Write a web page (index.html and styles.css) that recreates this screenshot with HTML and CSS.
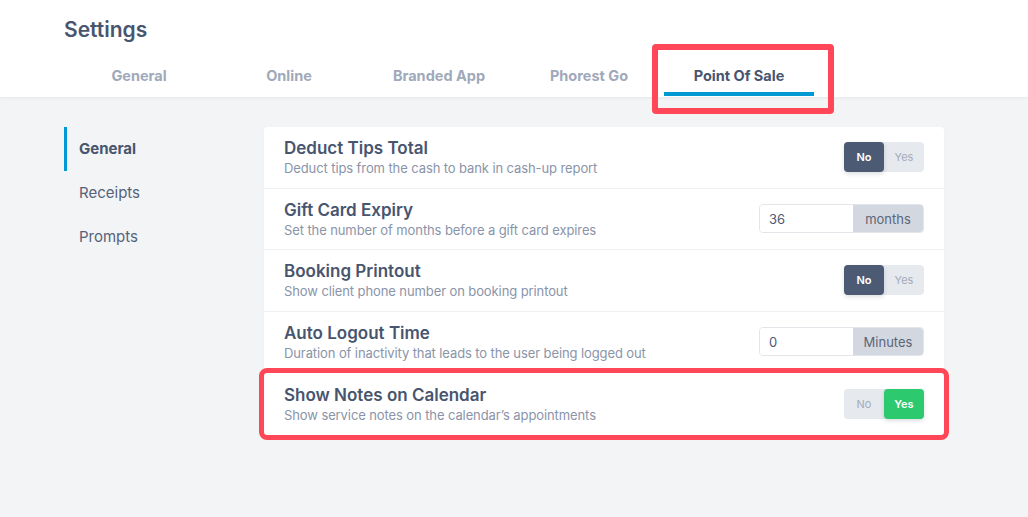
FILE: index.html
```html
<!DOCTYPE html>
<html>
<head>
<meta charset="utf-8">
<link rel="stylesheet" href="styles.css">
</head>
<body>
<header class="header">
  <h1 class="title">Settings</h1>
  <nav class="tabs">
    <div class="tab">General</div>
    <div class="tab">Online</div>
    <div class="tab">Branded App</div>
    <div class="tab">Phorest Go</div>
    <div class="tab tab-active">Point Of Sale<span class="mark mark-tab"></span></div>
  </nav>
</header>
<main class="main">
  <aside class="side">
    <div class="side-item side-active">General</div>
    <div class="side-item">Receipts</div>
    <div class="side-item">Prompts</div>
  </aside>
  <section class="card">
    <div class="row">
      <div class="text">
        <div class="row-title">Deduct Tips Total</div>
        <div class="row-desc">Deduct tips from the cash to bank in cash-up report</div>
      </div>
      <div class="toggle"><span class="opt on-dark">No</span><span class="opt">Yes</span></div>
    </div>
    <div class="row">
      <div class="text">
        <div class="row-title">Gift Card Expiry</div>
        <div class="row-desc">Set the number of months before a gift card expires</div>
      </div>
      <div class="group"><span class="field">36</span><span class="addon">months</span></div>
    </div>
    <div class="row">
      <div class="text">
        <div class="row-title">Booking Printout</div>
        <div class="row-desc">Show client phone number on booking printout</div>
      </div>
      <div class="toggle"><span class="opt on-dark">No</span><span class="opt">Yes</span></div>
    </div>
    <div class="row">
      <div class="text">
        <div class="row-title">Auto Logout Time</div>
        <div class="row-desc">Duration of inactivity that leads to the user being logged out</div>
      </div>
      <div class="group"><span class="field">0</span><span class="addon">Minutes</span></div>
    </div>
    <div class="row row-marked">
      <div class="text">
        <div class="row-title">Show Notes on Calendar</div>
        <div class="row-desc">Show service notes on the calendar’s appointments</div>
      </div>
      <div class="toggle"><span class="opt">No</span><span class="opt on-green">Yes</span></div>
    </div>
  </section>
</main>
</body>
</html>
```
FILE: styles.css
```css
* { box-sizing: border-box; }
html, body { margin: 0; padding: 0; }
body {
  width: 1028px;
  height: 517px;
  overflow: hidden;
  background: #f3f4f6;
  font-family: Inter, "Open Sans", "Liberation Sans", sans-serif;
  color: #4a5670;
}
.header {
  background: #fff;
  height: 97px;
  padding: 16px 0 0 64px;
  box-shadow: 0 1px 3px rgba(30, 40, 60, 0.06);
  position: relative;
  z-index: 1;
}
.title {
  margin: 0;
  font-size: 21px;
  line-height: 28px;
  font-weight: 600;
  color: #48556f;
}
.tabs {
  display: flex;
  margin-top: 8px;
}
.tab {
  position: relative;
  width: 150px;
  height: 44px;
  padding-top: 14px;
  text-align: center;
  font-size: 14.5px;
  line-height: 20px;
  font-weight: 700;
  color: #a0a9ba;
  border-bottom: 4px solid transparent;
}
.tab-active {
  color: #48556f;
  border-bottom-color: #0099d4;
}
.mark {
  position: absolute;
  border: 6px solid #ff4757;
  border-radius: 4px;
  pointer-events: none;
}
.mark-tab {
  left: -12px;
  right: -20px;
  top: -8px;
  bottom: -22px;
}
.main {
  display: flex;
  padding: 30px 0 0 64px;
}
.side {
  width: 200px;
  flex: none;
}
.side-item {
  padding: 10px 0 11px 12px;
  border-left: 3px solid transparent;
  font-size: 15px;
  line-height: 23px;
  color: #56627a;
}
.side-active {
  border-left-color: #0099d4;
  font-weight: 700;
  color: #48556f;
}
.card {
  width: 680px;
  background: #fff;
  border-radius: 4px;
  box-shadow: 0 1px 2px rgba(30, 40, 60, 0.04);
}
.row {
  display: flex;
  align-items: center;
  justify-content: space-between;
  height: 61.5px;
  padding: 0 20px;
  border-bottom: 1px solid #eef0f3;
}
.row:last-child { border-bottom: none; }
.row-marked {
  outline: 5px solid #ff4757;
  border-radius: 3px;
  position: relative;
}
.row-title {
  font-size: 17px;
  line-height: 22px;
  font-weight: 600;
  color: #48556f;
}
.row-desc {
  font-size: 13px;
  line-height: 18px;
  color: #8a94a8;
  margin-top: 0;
  letter-spacing: -0.1px;
}
.toggle {
  display: flex;
  width: 80px;
  height: 30px;
  border-radius: 4px;
  background: #e6e9ee;
}
.opt {
  width: 40px;
  display: flex;
  align-items: center;
  justify-content: center;
  font-size: 11px;
  color: #a3abbb;
  border-radius: 4px;
}
.on-dark {
  background: #4d5a74;
  color: #fff;
  font-weight: 600;
  box-shadow: 0 2px 4px rgba(30, 40, 60, 0.15);
}
.on-green {
  background: #2dc96f;
  color: #fff;
  font-weight: 600;
  box-shadow: 0 2px 4px rgba(30, 40, 60, 0.15);
}
.group {
  display: flex;
  width: 165px;
  height: 29px;
  border: 1px solid #e2e5ea;
  border-radius: 4px;
  overflow: hidden;
}
.field {
  flex: 1;
  display: flex;
  align-items: center;
  padding-left: 9px;
  font-size: 13px;
  color: #4e5a72;
  background: #fff;
}
.addon {
  width: 70px;
  display: flex;
  align-items: center;
  justify-content: center;
  background: #d3d8e0;
  font-size: 13px;
  color: #5b657a;
}
```
